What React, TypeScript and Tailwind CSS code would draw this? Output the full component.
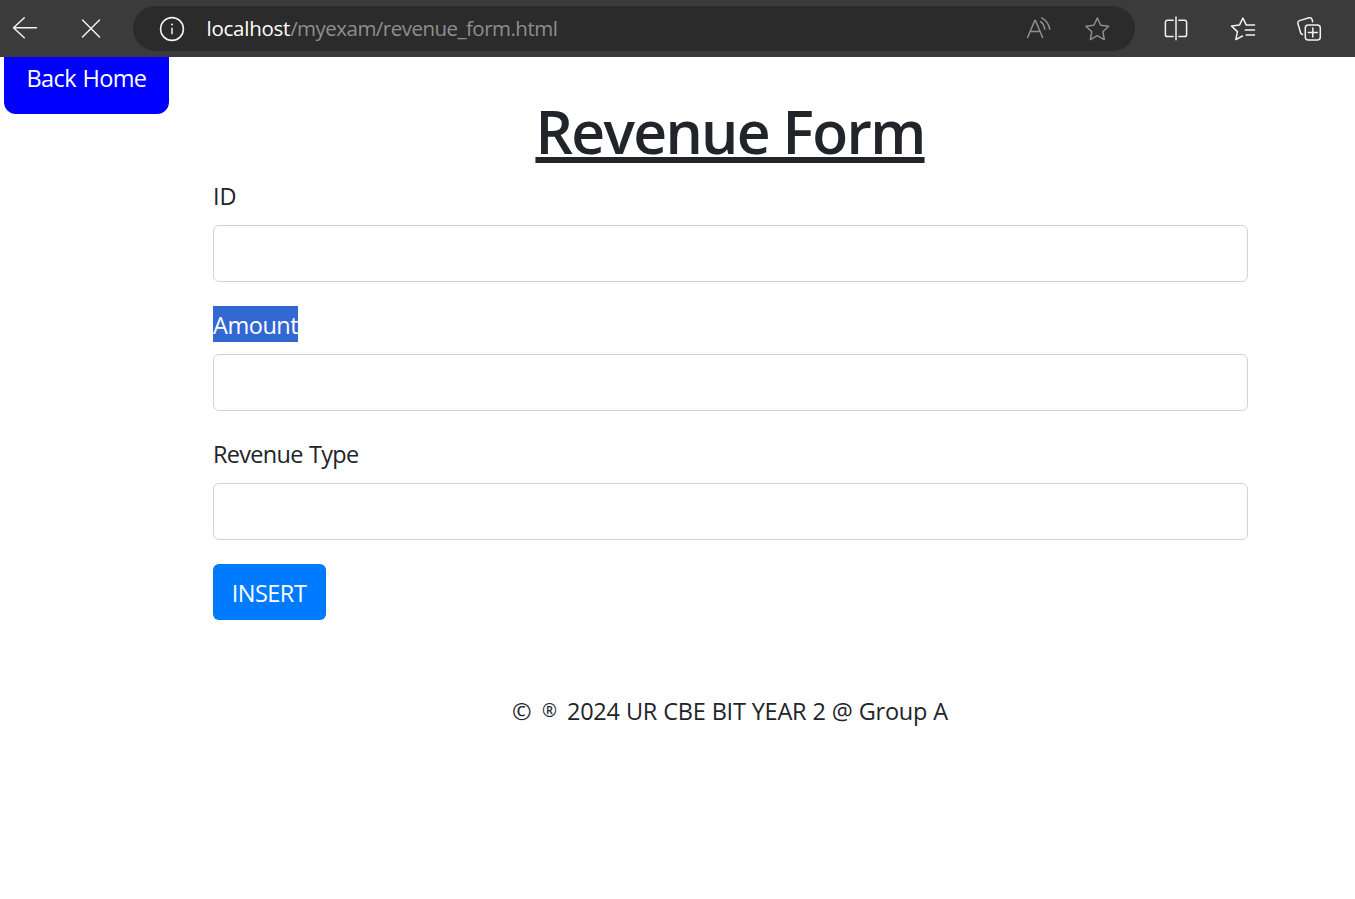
import type { ReactNode } from "react";

function Field({ id, label, labelClass }: { id: string; label: string; labelClass: string }) {
  return (
    <div className="mb-6 flex flex-col items-start">
      <label htmlFor={id} className={`mb-3 h-9 leading-[39px] ${labelClass}`}>
        {label}
      </label>
      <input id={id} className="block h-[57px] w-full rounded-[6px] border border-[#ced4da] bg-white px-[18px] outline-none" />
    </div>
  );
}

function Icon({ children, className }: { children: ReactNode; className: string }) {
  return (
    <svg
      viewBox="0 0 26 26"
      fill="none"
      stroke="currentColor"
      strokeWidth="1.5"
      strokeLinecap="round"
      strokeLinejoin="round"
      className={`size-[26px] shrink-0 ${className}`}
    >
      {children}
    </svg>
  );
}

function BrowserBar() {
  return (
    <header className="flex h-[57px] items-center bg-[#3b3b3b] text-[#f2f2f2]">
      <Icon className="ml-3">
        <path d="M1.5 11.7H24.500M12.300 1.700 1.500 11.700l10.800 10" />
      </Icon>
      <Icon className="ml-10">
        <path d="m4.500 4 17 17M21.500 4l-17 17" />
      </Icon>
      <div className="ml-[29px] flex h-[45px] w-[1002px] items-center rounded-full bg-[#2b2b2b]">
        <Icon className="ml-[26px]">
          <circle cx="13" cy="13" r="11.4" strokeWidth="1.6" />
          <path d="M13 11.8v6.4" strokeLinecap="butt" />
          <circle cx="13" cy="8.4" r="1" fill="currentColor" stroke="none" />
        </Icon>
        <div className="ml-[21.5px] flex-1 text-[20.5px] leading-none">
          <span className="tracking-[-0.25px] text-white">localhost</span>
          <span className="tracking-[-0.52px] text-[#8e8e8e]">/myexam/revenue_form.html</span>
        </div>
        <Icon className="text-[#8e8e8e]">
          <path d="M2.600 21.500 9.800 4.500h.6l7.200 17M5.400 15.400h9.400M15.600 5.600q3.700 2.700 4.100 7.700M16.800 1.800q6.800 4 8 11.500" />
        </Icon>
        <Icon className="mr-[25px] ml-[33px] text-[#8e8e8e]">
          <path d="m13.300 2 3.400 7.200 8 1-5.900 5.500 1.500 7.900-7-3.900-7 3.900 1.500-7.900L1.900 10.200l8-1Z" />
        </Icon>
      </div>
      <Icon className="ml-[28px]">
        <path d="M10.200 4.200H4.600a2.200 2.200 0 0 0-2.200 2.200v12a2.200 2.200 0 0 0 2.200 2.200h5.600M15.800 4.200h5.600a2.200 2.200 0 0 1 2.200 2.200v12a2.200 2.200 0 0 1-2.200 2.200h-5.600M13 1.100v22.700" />
      </Icon>
      <Icon className="ml-[41px]">
        <path d="M16.200 8.900 12.900 2 9.600 8.900l-8 1.200 5.800 5.500-1.500 8 6.600-3.600M16.200 9h8.300M15.200 14h9.300M16.200 18.900h8.300" />
      </Icon>
      <Icon className="ml-[40px]">
        <rect x="9.300" y="9.100" width="15" height="15" rx="3" />
        <path d="M16.800 12.100v9M12.300 16.600h9M6.500 18.600a2.400 2.400 0 0 1-1.900-1.800L1.900 7.600a2.400 2.400 0 0 1 1.600-3L13 1.800a2.400 2.400 0 0 1 3 1.600l.7 2.400" />
      </Icon>
    </header>
  );
}

export default function App() {
  return (
    <div className="flex h-[899px] flex-col overflow-hidden bg-white font-['Open_Sans',sans-serif] text-[23.5px] text-[#212529]">
      <BrowserBar />
      <a className="ml-1 h-[57px] w-[165px] shrink-0 rounded-b-[12px] bg-[#0000ff] pl-[22.5px] leading-[42px] tracking-[-0.6px] text-white [word-spacing:1px]">
        Back Home
      </a>
      <main className="ml-[213px] w-[1035px]">
        <h1 className="-mt-[19px] h-[82px] pr-px text-center text-[58.8px] leading-[72px] font-semibold tracking-[-1.68px]">
          <span className="underline decoration-[6px] underline-offset-[3px] [text-decoration-skip-ink:none]">Revenue Form</span>
        </h1>
        <Field id="id" label="ID" labelClass="" />
        <Field id="amount" label="Amount" labelClass="bg-[#3367d1] tracking-[-0.45px] text-white" />
        <Field id="type" label="Revenue Type" labelClass="tracking-[-0.72px] [word-spacing:1px]" />
        <button className="block h-14 w-[113px] rounded-[6px] bg-[#007bff] pr-px leading-[58px] tracking-[-0.5px] text-white">INSERT</button>
        <footer className="mt-[73px] flex h-9 pl-[299px] leading-[37px]">
          <span className="w-[30px]">©</span>
          <span className="w-[25px] text-[18px] leading-[34px]">®</span>
          <span className="tracking-[-0.25px] [word-spacing:0.3px]">2024 UR CBE BIT YEAR 2 @ Group A</span>
        </footer>
      </main>
    </div>
  );
}
